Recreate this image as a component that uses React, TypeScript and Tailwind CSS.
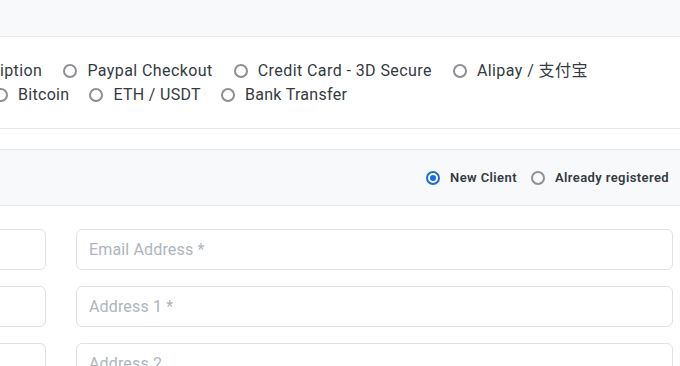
const methods1 = ['Paypal Checkout', 'Credit Card - 3D Secure', 'Alipay / 支付宝']
const methods2 = ['Bitcoin', 'ETH / USDT', 'Bank Transfer']

function Radio({ label, checked = false }: { label: string; checked?: boolean }) {
    return (
        <label className="flex items-center gap-[10px] shrink-0 whitespace-nowrap">
            <span
                className={
                    checked
                        ? 'w-[14px] h-[14px] rounded-full border-2 border-[#1a6ae0] flex items-center justify-center'
                        : 'w-[14px] h-[14px] rounded-full border-2 border-[#8f8f95]'
                }
            >
                {checked && <span className="w-[6px] h-[6px] rounded-full bg-[#1a6ae0]"></span>}
            </span>
            <span>{label}</span>
        </label>
    )
}

export default function App() {
    return (
        <div className="w-[680px] h-[366px] overflow-hidden bg-white text-[#343a40] font-['Roboto','Noto_Sans_CJK_SC',sans-serif]">
            <div className="h-[37px] bg-[#f8f9fa] border-b border-[#e5e7eb]"></div>

            <div className="pt-[22px] pb-[21px] border-b border-[#e5e7eb] text-[16px] leading-[24px]">
                <div className="flex gap-[21px] ml-[-52px] tracking-[0.42px]">
                    <span className="whitespace-nowrap">Subscription</span>
                    {methods1.map((m) => (
                        <Radio key={m} label={m} />
                    ))}
                </div>
                <div className="flex gap-[20px] ml-[-6px] tracking-[0.3px]">
                    {methods2.map((m) => (
                        <Radio key={m} label={m} />
                    ))}
                </div>
            </div>

            <div className="mt-[20px] h-[57px] bg-[#f8f9fa] border-y border-[#e5e7eb] flex items-center justify-end pr-[11px] gap-[14px] text-[13px] font-semibold tracking-[0.4px]">
                <Radio label="New Client" checked />
                <Radio label="Already registered" />
            </div>

            <div className="ml-[-200px] mr-[7px] mt-[23px] grid grid-cols-[1fr_597px] gap-x-[30px] gap-y-[16px] text-[16px] tracking-[0.15px] text-[#adb5bd]">
                <div className="h-[41px] rounded-[6px] border border-[#dee2e6]"></div>
                <div className="h-[41px] rounded-[6px] border border-[#dee2e6] px-[12px] flex items-center">Email Address *</div>
                <div className="h-[41px] rounded-[6px] border border-[#dee2e6]"></div>
                <div className="h-[41px] rounded-[6px] border border-[#dee2e6] px-[12px] flex items-center">Address 1 *</div>
                <div className="h-[41px] rounded-[6px] border border-[#dee2e6]"></div>
                <div className="h-[41px] rounded-[6px] border border-[#dee2e6] px-[12px] flex items-center">Address 2</div>
            </div>
        </div>
    )
}
